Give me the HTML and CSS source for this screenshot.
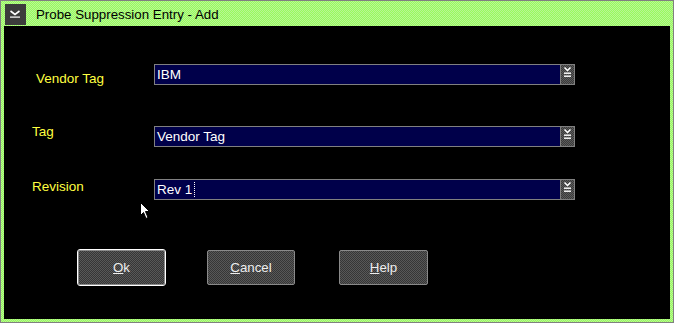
FILE: index.html
```html
<!DOCTYPE html>
<html lang="en">

<head>
    <meta charset="UTF-8">
    <title>Probe Suppression Entry - Add</title>
    <link rel="stylesheet" href="styles.css">
</head>

<body>

    <div class="window">
        <div class="titlebar">
            <span class="sysmenu">
                <svg width="21" height="21" viewBox="0 0 21 21">
                    <polyline points="5.5,7 10,10.5 14.5,7" fill="none" stroke="#fff" stroke-width="1.6" />
                    <rect x="5" y="12.5" width="10" height="1.2" fill="#fff" />
                </svg>
            </span>
            <span class="title">Probe Suppression Entry - Add</span>
        </div>

        <div class="client">
            <div class="row row-vendor">
                <label class="label label-vendor">Vendor Tag</label>
                <div class="combo">
                    <span class="combo-text">IBM</span>
                    <span class="combo-btn">
                        <svg width="13" height="19" viewBox="0 0 13 19">
                            <polyline points="3.5,2.5 6.5,5.5 9.5,2.5" fill="none" stroke="#fff" stroke-width="1.5" />
                            <rect x="3" y="7.5" width="7" height="1.4" fill="#fff" />
                            <rect x="3" y="10.5" width="7" height="1.4" fill="#fff" />
                        </svg>
                    </span>
                </div>
            </div>

            <div class="row row-tag">
                <label class="label label-tag">Tag</label>
                <div class="combo">
                    <span class="combo-text">Vendor Tag</span>
                    <span class="combo-btn">
                        <svg width="13" height="19" viewBox="0 0 13 19">
                            <polyline points="3.5,2.5 6.5,5.5 9.5,2.5" fill="none" stroke="#fff" stroke-width="1.5" />
                            <rect x="3" y="7.5" width="7" height="1.4" fill="#fff" />
                            <rect x="3" y="10.5" width="7" height="1.4" fill="#fff" />
                        </svg>
                    </span>
                </div>
            </div>

            <div class="row row-revision">
                <label class="label label-revision">Revision</label>
                <div class="combo">
                    <span class="combo-text">Rev 1<span class="caret"></span></span>
                    <span class="combo-btn">
                        <svg width="13" height="19" viewBox="0 0 13 19">
                            <polyline points="3.5,2.5 6.5,5.5 9.5,2.5" fill="none" stroke="#fff" stroke-width="1.5" />
                            <rect x="3" y="7.5" width="7" height="1.4" fill="#fff" />
                            <rect x="3" y="10.5" width="7" height="1.4" fill="#fff" />
                        </svg>
                    </span>
                </div>
            </div>

            <div class="buttons">
                <button class="btn btn-ok"><u>O</u>k</button>
                <button class="btn btn-cancel"><u>C</u>ancel</button>
                <button class="btn btn-help"><u>H</u>elp</button>
            </div>

            <!-- mouse pointer sits over the dialog -->
            <svg class="pointer" width="12" height="18" viewBox="0 0 12 18">
                <polygon points="0.5,0.5 0.5,13.5 3.5,10.5 6,16.5 8,15.5 5.5,9.5 9.5,9.5" fill="#fff" stroke="#000" stroke-width="1" />
            </svg>
        </div>
    </div>

</body>

</html>
```

FILE: styles.css
```css
body {
    margin: 0;
    background-color: #000;
    font-family: "Liberation Sans", Arial, sans-serif;
}

.window {
    width: 674px;
    height: 323px;
    box-sizing: border-box;
    border: 1px solid #808080;
    padding: 0 3px 3px 3px;
    background: repeating-conic-gradient(#98fc5c 0 25%, #b8f496 0 50%) 0 0 / 2px 2px;
}

.titlebar {
    display: flex;
    align-items: flex-start;
    height: 25px;
    padding-left: 1px;
}

.sysmenu {
    display: block;
    width: 21px;
    height: 21px;
    margin-top: 3px;
    background-color: #3c3c3c;
}

.sysmenu svg {
    display: block;
}

.title {
    margin: 6px 0 0 10px;
    font-size: 13.3px;
    line-height: 16px;
    color: #000;
}

.client {
    position: relative;
    height: 293px;
    background-color: #000;
    padding-top: 38px;
    box-sizing: border-box;
}

.row {
    display: flex;
    align-items: flex-start;
    height: 21px;
}

.row-tag {
    margin-top: 41px;
}

.row-revision {
    margin-top: 32px;
}

.label {
    width: 150px;
    box-sizing: border-box;
    padding-left: 28px;
    font-size: 13.5px;
    line-height: 16px;
    color: #ffff40;
}

.label-vendor {
    padding-left: 32px;
    margin-top: 7px;
}

.label-tag {
    margin-top: -2px;
}

.label-revision {
    margin-top: 0;
}

.combo {
    display: flex;
    width: 421px;
    height: 21px;
    box-sizing: border-box;
    border: 1px solid #808080;
}

.combo-text {
    flex: 1;
    padding: 2px 2px 0 2px;
    font-size: 13.5px;
    line-height: 16px;
    color: #fff;
    background-color: #00004a;
}

.caret {
    display: inline-block;
    width: 0;
    height: 15px;
    margin-left: 2px;
    vertical-align: -3px;
    border-left: 1px dotted #fff;
}

.combo-btn {
    width: 13px;
    border-left: 1px solid #808080;
    background: repeating-conic-gradient(#3a3a3a 0 25%, #5c5c5c 0 50%) 0 0 / 2px 2px;
}

.combo-btn svg {
    display: block;
}

.buttons {
    display: flex;
    margin-top: 50px;
    padding-left: 74px;
}

.btn {
    width: 88px;
    height: 35px;
    box-sizing: border-box;
    border: 1px solid #8a8a8a;
    border-radius: 2px;
    padding: 0;
    background: repeating-conic-gradient(#363636 0 25%, #585858 0 50%) 0 0 / 2px 2px;
    color: #eeeeee;
    font-family: "Liberation Sans", Arial, sans-serif;
    font-size: 13.3px;
    line-height: 16px;
}

.btn u {
    text-underline-offset: 1px;
}

.btn-ok {
    width: 87px;
    outline: 1px solid #fff;
}

.btn-cancel {
    margin-left: 42px;
}

.btn-help {
    margin-left: 44px;
    width: 89px;
}

.pointer {
    position: absolute;
    left: 136px;
    top: 176px;
}
```
